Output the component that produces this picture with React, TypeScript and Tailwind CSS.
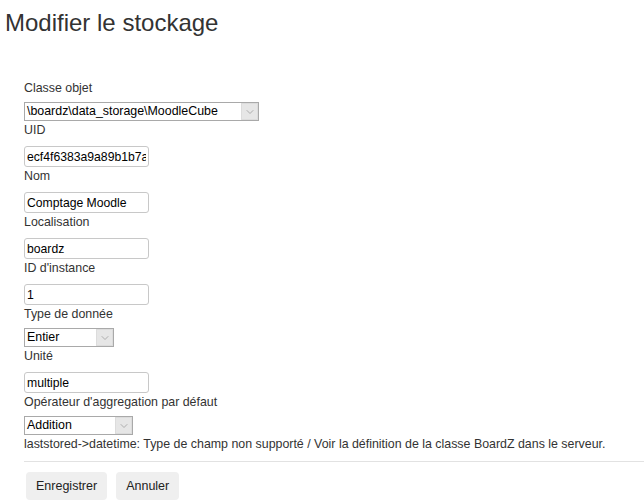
import { ChevronDown } from 'lucide-react';

const font = { fontFamily: '"Liberation Sans", Arial, sans-serif' };

const Label = ({ children }: { children: React.ReactNode }) => (
  <div className="text-[12.4px] leading-[18px] text-[#333]">{children}</div>
);

const TextField = ({ label, value }: { label: string; value: string }) => (
  <div>
    <Label>{label}</Label>
    <input
      defaultValue={value}
      className="mt-[7px] block h-[21px] w-[125px] rounded-[3px] border border-[#c8c8c8] bg-white px-[2px] text-[12.2px] text-black outline-none"
    />
  </div>
);

const SelectField = ({ label, value, width }: { label: string; value: string; width: string }) => (
  <div>
    <Label>{label}</Label>
    <div className={`mt-[5px] flex h-[19px] items-stretch border border-[#a9a9a9] bg-white ${width}`}>
      <span className="flex-1 overflow-hidden whitespace-nowrap pl-[2px] text-[12.4px] leading-[17px] text-black">{value}</span>
      <div className="flex w-[17px] items-center justify-center border border-[#dcdcdc] bg-[#e6e6e6]">
        <ChevronDown className="h-3 w-3 text-[#9a9a9a]" strokeWidth={1.5} />
      </div>
    </div>
  </div>
);

export default function App() {
  return (
    <div className="min-h-screen bg-white" style={font}>
      <h2 className="ml-[5px] pt-[10px] text-[24px] leading-[26px] text-[#333]">Modifier le stockage</h2>

      <div className="mt-[43px] pl-[24px]">
        <SelectField label="Classe objet" value="\boardz\data_storage\MoodleCube" width="w-[235px]" />
        <TextField label="UID" value="ecf4f6383a9a89b1b7a2" />
        <TextField label="Nom" value="Comptage Moodle" />
        <TextField label="Localisation" value="boardz" />
        <TextField label="ID d'instance" value="1" />
        <SelectField label="Type de donnée" value="Entier" width="w-[90px]" />
        <TextField label="Unité" value="multiple" />
        <SelectField label="Opérateur d'aggregation par défaut" value="Addition" width="w-[109px]" />
        <Label>laststored-&gt;datetime: Type de champ non supporté / Voir la définition de la classe BoardZ dans le serveur.</Label>

        <hr className="mt-[8px] border-t border-[#e2e2e2]" />

        <div className="mt-[10px] flex gap-[9px] pl-[2px]">
          <button className="h-[28px] rounded-[4px] bg-[#efefef] px-[10px] text-[12.5px] text-[#222]">Enregistrer</button>
          <button className="h-[28px] rounded-[4px] bg-[#efefef] px-[10px] text-[12.5px] text-[#222]">Annuler</button>
        </div>
      </div>
    </div>
  );
}
